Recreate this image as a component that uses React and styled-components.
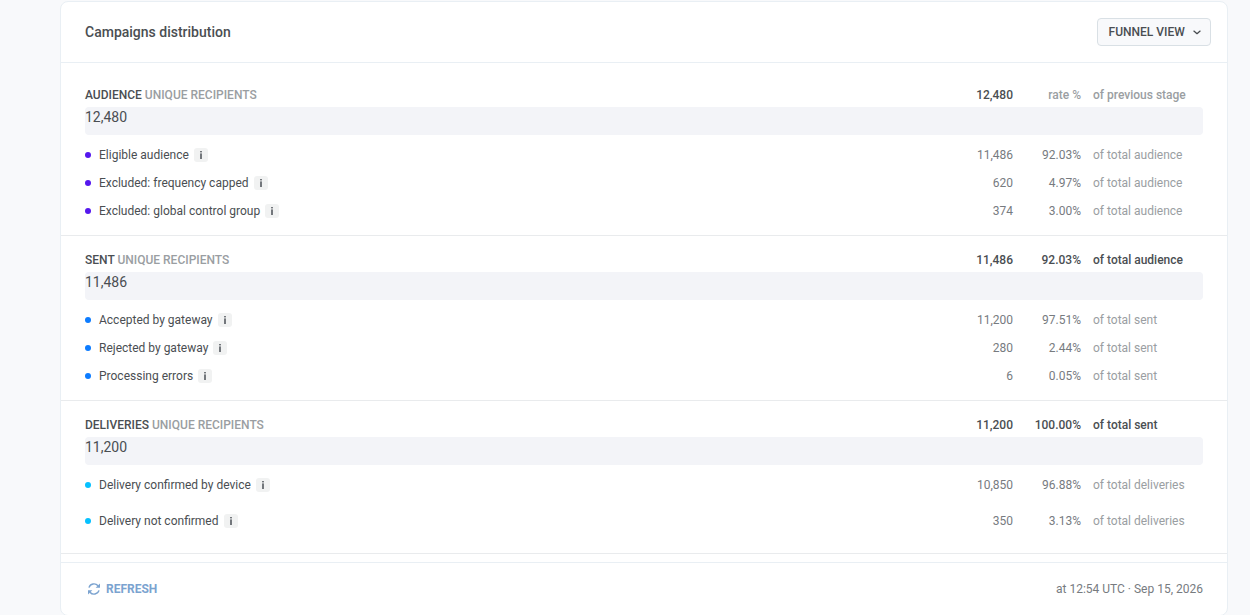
import React from 'react';
import styled, { createGlobalStyle } from 'styled-components';

const stages = [
    {
        name: "AUDIENCE", total: "12,480", rate: "rate %", of: "of previous stage", muted: true, color: "#5518ee",
        rows: [
            { label: "Eligible audience", count: "11,486", rate: "92.03%", of: "of total audience" },
            { label: "Excluded: frequency capped", count: "620", rate: "4.97%", of: "of total audience" },
            { label: "Excluded: global control group", count: "374", rate: "3.00%", of: "of total audience" },
        ],
    },
    {
        name: "SENT", total: "11,486", rate: "92.03%", of: "of total audience", color: "#0d7cff",
        rows: [
            { label: "Accepted by gateway", count: "11,200", rate: "97.51%", of: "of total sent" },
            { label: "Rejected by gateway", count: "280", rate: "2.44%", of: "of total sent" },
            { label: "Processing errors", count: "6", rate: "0.05%", of: "of total sent" },
        ],
    },
    {
        name: "DELIVERIES", total: "11,200", rate: "100.00%", of: "of total sent", color: "#06c1ff", spaced: true,
        rows: [
            { label: "Delivery confirmed by device", count: "10,850", rate: "96.88%", of: "of total deliveries" },
            { label: "Delivery not confirmed", count: "350", rate: "3.13%", of: "of total deliveries" },
        ],
    },
];

function Info()
{
    return (
        <InfoBadge>
            <svg width="14" height="14" viewBox="0 0 14 14" fill="#73777c">
                <rect x="6" y="3" width="2" height="1.4" />
                <rect x="6" y="5.4" width="2" height="5.6" />
            </svg>
        </InfoBadge>
    );
}

function Stage({ stage })
{
    return (
        <StageSection $spaced={stage.spaced}>
            <StageHead>
                <h2>{stage.name} <span>UNIQUE RECIPIENTS</span></h2>
                <Count>{stage.total}</Count>
                <Rate $muted={stage.muted}>{stage.rate}</Rate>
                <Of $muted={stage.muted}>{stage.of}</Of>
            </StageHead>
            <Bar>{stage.total}</Bar>
            <Rows $spaced={stage.spaced}>
                {stage.rows.map((row) => (
                    <Row key={row.label}>
                        <RowLabel><Dot $color={stage.color} />{row.label}<Info /></RowLabel>
                        <Count>{row.count}</Count>
                        <Rate>{row.rate}</Rate>
                        <Of $muted>{row.of}</Of>
                    </Row>
                ))}
            </Rows>
        </StageSection>
    );
}

function App()
{
    return (
        <Page>
            <GlobalStyle />
            <Card>
                <Header>
                    <h1>Campaigns distribution</h1>
                    <ViewButton>
                        FUNNEL VIEW
                        <svg width="8" height="5" viewBox="0 0 8 5" fill="none" stroke="#464a4e" strokeWidth="1.3" strokeLinecap="round" strokeLinejoin="round">
                            <path d="M0.9 1.1 L4 3.7 L7.1 1.1" />
                        </svg>
                    </ViewButton>
                </Header>
                <Content>
                    {stages.map((stage) => <Stage key={stage.name} stage={stage} />)}
                </Content>
                <Footer>
                    <RefreshButton>
                        <svg width="12" height="12" viewBox="0 0 12 12" fill="none" stroke="#7ba3d0" strokeWidth="1.4">
                            <path d="M1 4.6 A5.2 5.2 0 0 1 10 2.8" />
                            <path d="M11 7.4 A5.2 5.2 0 0 1 2 9.2" />
                            <path d="M12 0.4 V4.8 H7.6 Z" fill="#7ba3d0" stroke="none" />
                            <path d="M0 11.6 V7.2 H4.4 Z" fill="#7ba3d0" stroke="none" />
                        </svg>
                        REFRESH
                    </RefreshButton>
                    <time>at 12:54 UTC · Sep 15, 2026</time>
                </Footer>
            </Card>
        </Page>
    );
}

const GlobalStyle = createGlobalStyle`
    * { box-sizing: border-box; }

    body
    {
        margin: 0;
        overflow: hidden;
        background-color: #f8f9fb;
        color: #4a4e52;
        font-family: Roboto, "Liberation Sans", sans-serif;
        font-size: 12px;
        line-height: 20px;
    }
`;

const Page = styled.div`
    height: 615px;
    padding: 1px 22px 0 60px;
    overflow: hidden;
`;

const Card = styled.div`
    width: 1168px;
    background-color: #fff;
    border: 1px solid #e9eff4;
    border-radius: 8px;
`;

const Header = styled.header`
    display: flex;
    justify-content: space-between;
    align-items: center;
    height: 61px;
    padding: 0 16px 0 24px;
    border-bottom: 1px solid #e9eff4;

    h1
    {
        margin: 0;
        font-size: 14px;
        font-weight: 500;
    }
`;

const ViewButton = styled.button`
    display: flex;
    align-items: center;
    gap: 8px;
    width: 114px;
    height: 28px;
    padding: 0 0 0 10.6px;
    border: 1px solid #d9e0e5;
    border-radius: 4px;
    background-color: #f8f9fb;
    color: #4a4e52;
    font: 500 12px/20px Roboto, sans-serif;
`;

const Content = styled.div`
    padding: 8px 0;
`;

const StageSection = styled.section`
    padding: 14px 24px ${(props) => props.$spaced ? "18px" : "10px"};
    border-bottom: 1px solid #e9ebed;
`;

const Count = styled.span`
    width: 80px;
    text-align: right;
`;

const Rate = styled.span`
    width: 68px;
    text-align: right;
    color: ${(props) => props.$muted ? "#9a9ea2" : "inherit"};
`;

const Of = styled.span`
    width: 110px;
    margin-left: 12px;
    color: ${(props) => props.$muted ? "#9a9ea2" : "inherit"};
`;

const StageHead = styled.div`
    display: flex;
    height: 22px;
    font-weight: 500;

    h2
    {
        flex: 1;
        margin: 0;
        font-size: 12px;
        font-weight: 500;
    }

    h2 span
    {
        color: #9a9ea2;
    }
`;

const Bar = styled.div`
    height: 28px;
    border-radius: 4px;
    background-color: #f3f4f8;
    font-size: 14px;
`;

const Rows = styled.div`
    display: flex;
    flex-direction: column;
    gap: ${(props) => props.$spaced ? "8px" : "0"};
    padding-top: 6px;
`;

const Row = styled.div`
    display: flex;
    align-items: center;
    height: 28px;
    color: #777b7f;
`;

const RowLabel = styled.div`
    display: flex;
    flex: 1;
    align-items: center;
    color: #4a4e52;
`;

const Dot = styled.i`
    width: 6px;
    height: 6px;
    margin-right: 8px;
    border-radius: 50%;
    background-color: ${(props) => props.$color};
`;

const InfoBadge = styled.span`
    width: 14px;
    height: 14px;
    margin-left: 5px;
    border-radius: 3px;
    background-color: #f1f2f2;

    svg
    {
        display: block;
    }
`;

const Footer = styled.footer`
    display: flex;
    justify-content: space-between;
    align-items: center;
    height: 53px;
    padding: 0 24px 0 27px;
    border-top: 1px solid #e9eff4;
    color: #777b7f;
`;

const RefreshButton = styled.button`
    display: flex;
    align-items: center;
    gap: 6px;
    padding: 0;
    border: 0;
    background: none;
    color: #7ba3d0;
    font: 700 12px/20px Roboto, sans-serif;
`;

export default App;
